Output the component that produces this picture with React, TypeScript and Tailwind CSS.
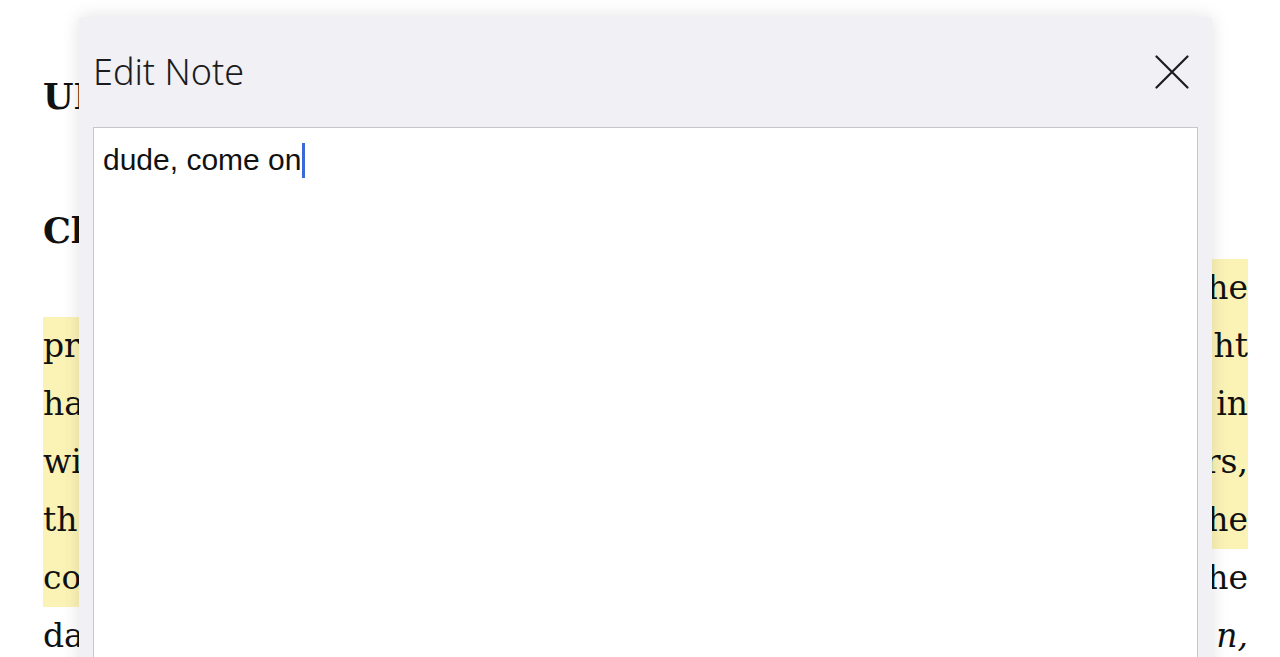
type Line = {
  start: string;
  end: string;
  // which part of the line carries the yellow highlight
  mark: "none" | "all" | "tail" | "head";
};

const lines: Line[] = [
  { start: "", end: "he", mark: "tail" },
  { start: "pr", end: "ht", mark: "all" },
  { start: "ha", end: "in", mark: "all" },
  { start: "wi", end: "rs,", mark: "all" },
  { start: "th", end: "he", mark: "all" },
  { start: "co", end: "he", mark: "head" },
  { start: "da", end: "n,", mark: "none" },
];

function TextLine({ line }: { line: Line }) {
  const hl = "bg-[#fbf3b6]";
  if (line.mark === "tail") {
    return (
      <div className="flex h-[58px] items-center">
        <div className="w-[500px] shrink-0" />
        <div className={`flex h-full flex-1 items-center justify-end ${hl}`}>{line.end}</div>
      </div>
    );
  }
  if (line.mark === "head") {
    return (
      <div className="flex h-[58px] items-center justify-between">
        <div className={`flex h-full w-[700px] items-center ${hl}`}>{line.start}</div>
        <span>{line.end}</span>
      </div>
    );
  }
  return (
    <div
      className={`flex h-[58px] items-center justify-between ${line.mark === "all" ? hl : ""}`}
    >
      <span>{line.start}</span>
      <span className={line.end === "n," ? "italic" : ""}>{line.end}</span>
    </div>
  );
}

export default function App() {
  return (
    <div className="relative h-[657px] w-[1280px] overflow-hidden bg-white">
      {/* reading page underneath */}
      <div className="pl-[43px] pr-[32px] pt-[76px] font-['DejaVu_Serif',serif] text-[33px] leading-[40px] text-[#111]">
        <div className="h-[42px] text-[35px] font-bold leading-[42px]">UNIT THREE</div>
        <div className="mt-[92px] h-[42px] text-[35px] font-bold leading-[42px]">Classwork</div>
        <div className="mt-[7px]">
          {lines.map((l, i) => (
            <TextLine key={i} line={l} />
          ))}
        </div>
      </div>

      {/* edit note sheet */}
      <div className="absolute left-[79px] top-[17px] h-[700px] w-[1133px] rounded-t-[4px] bg-[#f0f0f5] shadow-[0_0_18px_rgba(0,0,0,0.12)]">
        <div className="flex h-[110px] items-center justify-between pl-[14px] pr-[23px]">
          <span className="font-['Noto_Sans',sans-serif] text-[36px] font-light leading-[44px] text-[#1c1c1e]">
            Edit Note
          </span>
          <svg width="34" height="34" viewBox="0 0 34 34" fill="none" stroke="#1c1c1e" strokeWidth="2.2" strokeLinecap="round">
            <path d="M1.5 1.5 32.5 32.5M32.5 1.5 1.5 32.5" />
          </svg>
        </div>
        <div className="mx-[14px] h-[600px] border border-[#c6c6cc] bg-white pl-[9px] pt-[14px]">
          <div className="flex items-center font-['Liberation_Sans',sans-serif] text-[30px] leading-[36px] text-[#111]">
            <span>dude, come on</span>
            <span className="ml-[1px] inline-block h-[35px] w-[3px] bg-[#3b6ad8]" />
          </div>
        </div>
      </div>
    </div>
  );
}
